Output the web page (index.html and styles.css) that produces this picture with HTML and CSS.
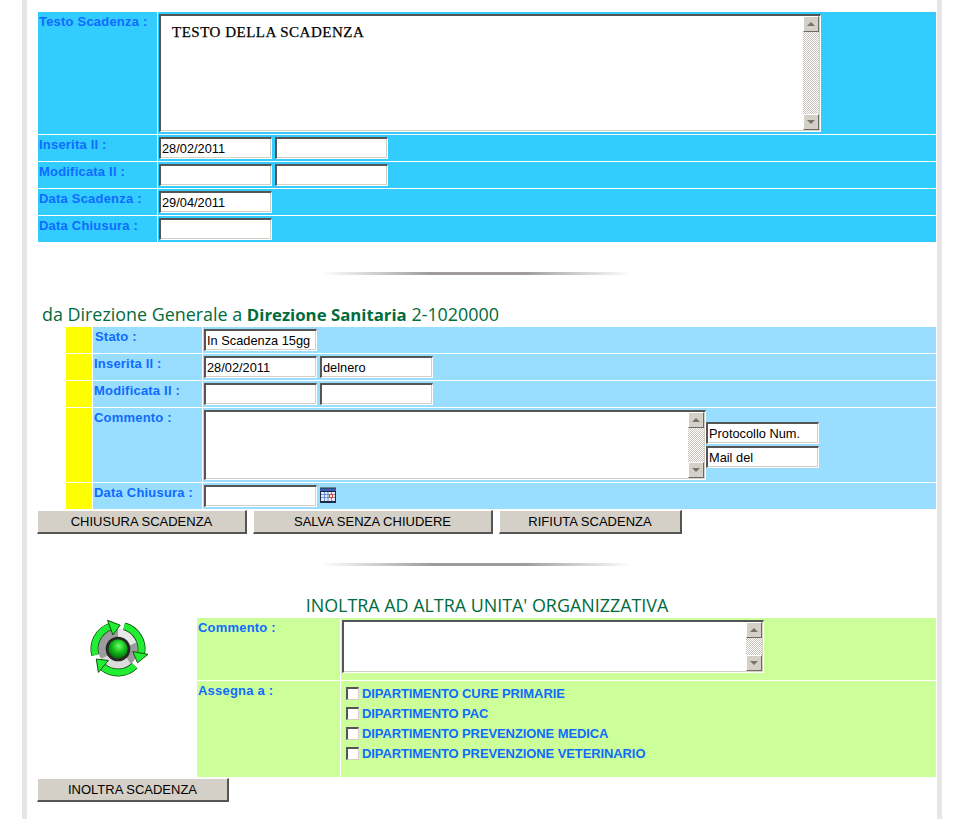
FILE: index.html
```html
<!DOCTYPE html>
<html lang="it">
<head>
<meta charset="utf-8">
<title>Scadenza</title>
<link rel="stylesheet" href="styles.css">
</head>
<body>
<main class="page">
  <section class="form form-main">
    <div class="label">Testo Scadenza :</div>
    <div class="value">
      <div class="area area-main">
        <div class="area-text">TESTO DELLA SCADENZA</div>
        <div class="scroll"><span class="sb-btn sb-up"></span><span class="sb-track"></span><span class="sb-btn sb-down"></span></div>
      </div>
    </div>
    <div class="label">Inserita Il :</div>
    <div class="value"><input class="field" value="28/02/2011"><input class="field"></div>
    <div class="label">Modificata Il :</div>
    <div class="value"><input class="field"><input class="field"></div>
    <div class="label">Data Scadenza :</div>
    <div class="value"><input class="field" value="29/04/2011"></div>
    <div class="label">Data Chiusura :</div>
    <div class="value"><input class="field"></div>
  </section>

  <div class="sep sep-first"></div>
  <h2 class="title title-left">da Direzione Generale a <b>Direzione Sanitaria</b> 2-1020000</h2>

  <section class="form form-dir">
    <div class="flag"></div>
    <div class="label label-stato">Stato :</div>
    <div class="value"><input class="field" value="In Scadenza 15gg"></div>
    <div class="flag"></div>
    <div class="label">Inserita Il :</div>
    <div class="value"><input class="field" value="28/02/2011"><input class="field" value="delnero"></div>
    <div class="flag"></div>
    <div class="label">Modificata Il :</div>
    <div class="value"><input class="field"><input class="field"></div>
    <div class="flag"></div>
    <div class="label">Commento :</div>
    <div class="value value-comment">
      <div class="area area-comment">
        <div class="area-text"></div>
        <div class="scroll"><span class="sb-btn sb-up"></span><span class="sb-track"></span><span class="sb-btn sb-down"></span></div>
      </div>
      <div class="side">
        <input class="field field-side" value="Protocollo Num.">
        <input class="field field-side" value="Mail del">
      </div>
    </div>
    <div class="flag"></div>
    <div class="label">Data Chiusura :</div>
    <div class="value value-cal">
      <input class="field">
      <svg class="cal" width="16" height="16" viewBox="0 0 16 16" aria-hidden="true">
        <rect x="0" y="1" width="16" height="15" fill="#1c2a4a"/>
        <rect x="0" y="1" width="16" height="3" fill="#3a5fb0"/>
        <path d="M1 0v2M3 0v2M5 0v2M7 0v2M9 0v2M11 0v2M13 0v2M15 0v2" stroke="#333" stroke-width="1"/>
        <rect x="1" y="5" width="14" height="9" fill="#e4eaf8"/>
        <path d="M1 7.500h14M1 10.500h14M4.500 5v9M8 5v9M11.500 5v9" stroke="#6f8fd6" stroke-width="1"/>
        <rect x="9.500" y="7.500" width="3" height="3" fill="#fff" stroke="#e8431c" stroke-width="1"/>
      </svg>
    </div>
  </section>

  <div class="actions actions-dir">
    <button class="btn btn-close" type="button">CHIUSURA SCADENZA</button>
    <button class="btn btn-save" type="button">SALVA SENZA CHIUDERE</button>
    <button class="btn btn-reject" type="button">RIFIUTA SCADENZA</button>
  </div>

  <div class="sep sep-second"></div>
  <h2 class="title title-center">INOLTRA AD ALTRA UNITA' ORGANIZZATIVA</h2>

  <section class="forward">
    <div class="forward-icon">
      <svg width="60" height="60" viewBox="2 2 56 56" aria-hidden="true">
        <defs>
          <radialGradient id="ball" cx="0.55" cy="0.35" r="0.7">
            <stop offset="0" stop-color="#6dff6d"/>
            <stop offset="0.5" stop-color="#10b818"/>
            <stop offset="1" stop-color="#045c0a"/>
          </radialGradient>
          <g id="arrow">
            <path d="M8.100 28A22 22 0 0 1 30 8" fill="none" stroke="#0a4a0a" stroke-width="7.400"/>
            <path d="M8.100 28A22 22 0 0 1 30 8" fill="none" stroke="#22ee33" stroke-width="6"/>
            <path d="M30 1.500L39.500 9.800L30 16Z" fill="#22ee33" stroke="#0a4a0a" stroke-width="0.800"/>
          </g>
        </defs>
        <circle cx="30" cy="30" r="18.500" fill="#9c9c9c"/>
        <path d="M30 11.500A18.500 18.500 0 0 1 47 24L38 28A8 8 0 0 0 30 22Z" fill="#e8e8e8"/>
        <path d="M14 39A18.500 18.500 0 0 0 42 44L36 35A8 8 0 0 1 23 35Z" fill="#dcdcdc"/>
        <use href="#arrow" transform="rotate(-20 30 30)"/>
        <use href="#arrow" transform="rotate(100 30 30)"/>
        <use href="#arrow" transform="rotate(220 30 30)"/>
        <circle cx="30" cy="30" r="11.500" fill="#262626"/>
        <circle cx="30" cy="30" r="9" fill="url(#ball)"/>
      </svg>
    </div>
    <div class="form form-forward">
      <div class="label">Commento :</div>
      <div class="value value-area">
        <div class="area area-forward">
          <div class="area-text"></div>
          <div class="scroll"><span class="sb-btn sb-up"></span><span class="sb-track"></span><span class="sb-btn sb-down"></span></div>
        </div>
      </div>
      <div class="label">Assegna a :</div>
      <div class="value value-list">
        <label class="check"><input type="checkbox" class="box">DIPARTIMENTO CURE PRIMARIE</label>
        <label class="check"><input type="checkbox" class="box">DIPARTIMENTO PAC</label>
        <label class="check"><input type="checkbox" class="box">DIPARTIMENTO PREVENZIONE MEDICA</label>
        <label class="check"><input type="checkbox" class="box">DIPARTIMENTO PREVENZIONE VETERINARIO</label>
      </div>
    </div>
  </section>

  <div class="actions actions-forward">
    <button class="btn btn-forward" type="button">INOLTRA SCADENZA</button>
  </div>
</main>
</body>
</html>
```

FILE: styles.css
```css
html, body {
  margin: 0;
  padding: 0;
  height: 100%;
  background: #fff;
  overflow: hidden;
}

.page {
  box-sizing: border-box;
  width: 920px;
  height: 819px;
  margin-left: 22px;
  padding-top: 12px;
  border-left: 5px solid #e6e6e6;
  border-right: 5px solid #e6e6e6;
  font-family: "Liberation Sans", Arial, sans-serif;
}

.form {
  display: grid;
  gap: 1px;
}

.form-main {
  grid-template-columns: 119px 778px;
  margin-left: 11px;
  --cell: #33ccff;
}

.form-dir {
  grid-template-columns: 26px 109px 733px;
  margin-left: 39px;
  --cell: #99ddff;
}

.form-forward {
  grid-template-columns: 143px 595px;
  --cell: #ccff99;
}

.label {
  background: var(--cell);
  padding: 2px 0 0 1px;
  font-size: 13px;
  line-height: 15px;
  font-weight: bold;
  letter-spacing: 0.2px;
  color: #0f6bff;
}

.form-dir .label-stato {
  padding-left: 2px;
}

.flag {
  background: #ffff00;
}

.value {
  display: flex;
  gap: 3px;
  background: var(--cell);
  padding: 2px 1px;
}

.value-area {
  padding-bottom: 7px;
}

.field {
  box-sizing: border-box;
  width: 113px;
  height: 22px;
  margin: 0;
  padding: 0 1px;
  border-style: solid;
  border-width: 2px 1px 1px 2px;
  border-color: #555 #fff #fff #555;
  box-shadow: inset -1px -1px 0 #d4d0c8;
  background: #fff;
  color: #000;
  font-family: "Liberation Sans", Arial, sans-serif;
  font-size: 12.8px;
  outline: none;
}

.area {
  box-sizing: border-box;
  display: flex;
  justify-content: space-between;
  border-style: solid;
  border-width: 2px 1px 1px 2px;
  border-color: #555 #fff #fff #555;
  box-shadow: inset -1px -1px 0 #d4d0c8;
  background: #fff;
}

.area-main {
  width: 662px;
  height: 118px;
}

.area-comment {
  width: 502px;
  height: 70px;
}

.area-forward {
  width: 422px;
  height: 53px;
}

.area-text {
  padding: 8px 0 0 11px;
  font-family: "Liberation Serif", "Times New Roman", serif;
  font-size: 15px;
  letter-spacing: 0.5px;
  line-height: 16px;
  color: #000;
  -webkit-text-stroke: 0.25px #000;
}

.scroll {
  display: flex;
  flex-direction: column;
  width: 16px;
  margin-right: 1px;
  margin-bottom: 1px;
}

.sb-btn {
  box-sizing: border-box;
  position: relative;
  flex: 0 0 16px;
  background: #d4d0c8;
  border-style: solid;
  border-width: 1px;
  border-color: #fff #6e6a64 #6e6a64 #fff;
}

.sb-btn::after {
  content: "";
  position: absolute;
  left: 3px;
  width: 0;
  height: 0;
  border-left: 4px solid transparent;
  border-right: 4px solid transparent;
}

.sb-up::after {
  top: 5px;
  border-bottom: 4px solid #77736d;
}

.sb-down::after {
  top: 5px;
  border-top: 4px solid #77736d;
}

.sb-track {
  flex: 1;
  background: repeating-conic-gradient(#c8c4bc 0 25%, #fff 0 50%) 0 0 / 2px 2px;
}

.value-comment {
  align-items: flex-start;
  gap: 0;
}

.side {
  display: flex;
  flex-direction: column;
  gap: 2px;
  margin-top: 12px;
}

.field-side {
  display: block;
}

.value-cal {
  align-items: flex-start;
}

.cal {
  flex: none;
  margin-top: 2px;
}

.sep {
  width: 310px;
  height: 3px;
  margin-left: 295px;
  background: linear-gradient(to right, rgba(150, 150, 150, 0), #a09c9c 35%, #a09c9c 65%, rgba(150, 150, 150, 0));
}

.sep-first {
  margin-top: 30px;
}

.sep-second {
  margin-top: 29px;
}

.title {
  margin: 0;
  height: 22px;
  font-family: "Open Sans", "Noto Sans", sans-serif;
  font-size: 17.9px;
  font-weight: normal;
  line-height: 22px;
  color: #006b3c;
}

.title b {
  font-size: 16.8px;
  font-weight: bold;
}

.title-left {
  margin-top: 28px;
  margin-bottom: 2px;
  padding-left: 15px;
}

.title-center {
  margin-top: 28px;
  margin-bottom: 2px;
  padding-left: 10px;
  text-align: center;
}

.actions {
  display: flex;
  gap: 6px;
  margin-left: 10px;
  margin-top: 1px;
}

.btn {
  box-sizing: border-box;
  height: 24px;
  margin: 0;
  padding: 0;
  background: #d4d0c8;
  border-style: solid;
  border-width: 1px 2px 2px 1px;
  border-color: #fff #555 #555 #fff;
  color: #000;
  font-family: "Liberation Sans", Arial, sans-serif;
  font-size: 13px;
}

.btn-close { width: 210px; }
.btn-save { width: 240px; }
.btn-reject { width: 183px; }
.btn-forward { width: 192px; }

.forward {
  display: grid;
  grid-template-columns: 159px 739px;
  margin-left: 11px;
}

.forward-icon {
  display: flex;
  justify-content: center;
  padding-top: 1px;
}

.value-list {
  display: block;
  height: 96px;
  box-sizing: border-box;
  padding: 2px 0 0 5px;
}

.check {
  display: flex;
  align-items: center;
  height: 20px;
  font-size: 13px;
  font-weight: bold;
  letter-spacing: -0.1px;
  color: #0f6bff;
}

.box {
  appearance: none;
  box-sizing: border-box;
  width: 13px;
  height: 13px;
  margin: 0 3px 0 0;
  border-style: solid;
  border-width: 2px 1px 1px 2px;
  border-color: #555 #d4d0c8 #d4d0c8 #555;
  background: #fff;
}
```
